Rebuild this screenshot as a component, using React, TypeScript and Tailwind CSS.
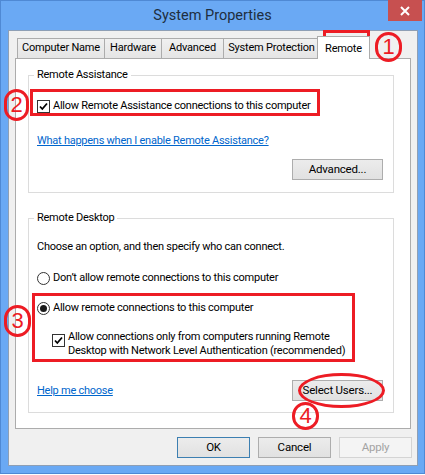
import React from "react";

const font = { fontFamily: 'Roboto, "Noto Sans", sans-serif' };

function CheckBox() {
    return (
        <span className="flex h-[13px] w-[13px] shrink-0 items-center justify-center border border-[#333333] bg-white">
            <svg width="11" height="11" viewBox="0 0 11 11">
                <path d="M2 5.5 L4.3 8 L9 2.5" fill="none" stroke="#000" strokeWidth="1.8" />
            </svg>
        </span>
    );
}

function Radio({ checked }: { checked?: boolean }) {
    return (
        <span className="flex h-[13px] w-[13px] shrink-0 items-center justify-center rounded-full border border-[#333333] bg-white">
            {checked && <span className="h-[7px] w-[7px] rounded-full bg-[#1a1a1a]" />}
        </span>
    );
}

function Tab({ label, w, active }: { label: string; w: string; active?: boolean }) {
    if (active) {
        return (
            <div
                className={`${w} relative z-10 -mb-px -ml-[3px] flex h-[23px] items-start justify-center whitespace-nowrap border border-b-0 border-[#acacac] bg-white pt-[4px] text-[11px] tracking-[-0.2px] text-black`}
            >
                {label}
            </div>
        );
    }
    return (
        <div
            className={`${w} -ml-px flex h-[20px] items-center justify-center whitespace-nowrap border border-b-0 border-[#acacac] bg-gradient-to-b from-[#f0f0f0] to-[#e5e5e5] text-[11px] tracking-[-0.2px] text-black first:ml-0`}
        >
            {label}
        </div>
    );
}

function Button({ children, w, primary, disabled }: { children: React.ReactNode; w: string; primary?: boolean; disabled?: boolean }) {
    const look = disabled
        ? "border-[#d4d4d4] bg-[#f4f4f4] text-[#a3a3a3]"
        : primary
        ? "border-[#3c7fb1] bg-gradient-to-b from-[#ececec] to-[#e1e1e1] text-black"
        : "border-[#adadad] bg-gradient-to-b from-[#ececec] to-[#e1e1e1] text-black";
    return (
        <div className={`${w} ${look} flex h-[21px] items-center justify-center whitespace-nowrap border text-[11.5px] tracking-[-0.2px]`}>
            {children}
        </div>
    );
}

function Mark({ n, cls }: { n: string; cls: string }) {
    return (
        <div
            className={`${cls} absolute flex items-center justify-center rounded-full border-[3px] border-[#ed1c24] text-[22px] leading-none text-[#ed1c24]`}
            style={{ fontFamily: '"Liberation Sans", sans-serif' }}
        >
            {n}
        </div>
    );
}

export default function App() {
    return (
        <div className="relative h-[475px] w-[425px] bg-white" style={font}>
            <div className="flex h-[474px] w-[425px] flex-col border border-[#4f89d4] bg-[#6aa9f4]">
                <div className="relative flex h-[29px] items-center justify-center">
                    <span className="text-[14.5px] text-[#1e2e40]">System Properties</span>
                    <div className="absolute -top-px right-[2px] flex h-[21px] w-[34px] items-center justify-center bg-[#c75050]">
                        <svg width="10" height="10" viewBox="0 0 10 10">
                            <path d="M1 1 L9 9 M9 1 L1 9" stroke="#fff" strokeWidth="2" />
                        </svg>
                    </div>
                </div>

                <div className="ml-[7px] flex h-[436px] w-[410px] flex-col border border-[#8e9fb5] bg-[#f0f0f0]">
                    <div className="flex items-end pl-[8px] pt-[5px]">
                        <Tab label="Computer Name" w="w-[88px]" />
                        <Tab label="Hardware" w="w-[58px]" />
                        <Tab label="Advanced" w="w-[63px]" />
                        <Tab label="System Protection" w="w-[97px]" />
                        <Tab label="Remote" w="w-[53px]" active />
                    </div>

                    <div className="ml-[6px] h-[371px] w-[396px] border border-[#acacac] bg-white text-[11px] tracking-[-0.25px] text-black">
                        <fieldset className="ml-[12px] mt-[8px] w-[366px] border border-[#dcdcdc] pb-[12px] pl-[8px] pr-[10px]">
                            <legend className="-ml-[3px] px-[3px] leading-[16px]">Remote Assistance</legend>
                            <div className="mt-[15px] flex h-[16px] items-center gap-[3px]">
                                <CheckBox />
                                <span>Allow Remote Assistance connections to this computer</span>
                            </div>
                            <div className="mt-[19px] h-[16px] leading-[16px] text-[#0066cc] underline">
                                What happens when I enable Remote Assistance?
                            </div>
                            <div className="mt-[10px] flex justify-end">
                                <Button w="w-[91px]">Advanced...</Button>
                            </div>
                        </fieldset>

                        <fieldset className="ml-[12px] mt-[17px] w-[366px] border border-[#dcdcdc] pb-[11px] pl-[8px] pr-[10px]">
                            <legend className="-ml-[3px] px-[3px] leading-[16px]">Remote Desktop</legend>
                            <div className="mt-[13px] h-[16px] leading-[16px]">
                                Choose an option, and then specify who can connect.
                            </div>
                            <div className="mt-[15px] flex h-[16px] items-center gap-[3px]">
                                <Radio />
                                <span>Don’t allow remote connections to this computer</span>
                            </div>
                            <div className="mt-[14px] flex h-[16px] items-center gap-[3px]">
                                <Radio checked />
                                <span>Allow remote connections to this computer</span>
                            </div>
                            <div className="ml-[15px] mt-[14px] flex items-start gap-[3px]">
                                <div className="pt-[4px]">
                                    <CheckBox />
                                </div>
                                <div className="flex flex-col whitespace-nowrap leading-[13.5px]">
                                    <span>Allow connections only from computers running Remote</span>
                                    <span>Desktop with Network Level Authentication (recommended)</span>
                                </div>
                            </div>
                            <div className="mt-[23px] flex items-center justify-between">
                                <span className="mt-[2px] text-[#0066cc] underline">Help me choose</span>
                                <Button w="w-[91px]">Select Users...</Button>
                            </div>
                        </fieldset>
                    </div>

                    <div className="mt-[8px] flex justify-end gap-[8px] pr-[5px]">
                        <Button w="w-[73px]" primary>OK</Button>
                        <Button w="w-[73px]">Cancel</Button>
                        <Button w="w-[73px]" disabled>Apply</Button>
                    </div>
                </div>
            </div>

            {/* annotations */}
            <div className="absolute left-[323px] top-[30px] h-[28px] w-[47px] border-[3px] border-[#ed1c24]" />
            <div className="absolute left-[30px] top-[89px] h-[27px] w-[290px] border-[3px] border-[#ed1c24]" />
            <div className="absolute left-[32px] top-[293px] h-[69px] w-[323px] border-[3px] border-[#ed1c24]" />
            <div className="absolute left-[298px] top-[373px] h-[35px] w-[87px] rounded-[50%] border-[3px] border-[#ed1c24]" />
            <Mark n="1" cls="left-[375px] top-[32px] h-[30px] w-[27px]" />
            <Mark n="2" cls="left-[4px] top-[89px] h-[32px] w-[25px]" />
            <Mark n="3" cls="left-[4px] top-[305px] h-[32px] w-[27px]" />
            <Mark n="4" cls="left-[292px] top-[402px] h-[28px] w-[27px]" />
        </div>
    );
}
